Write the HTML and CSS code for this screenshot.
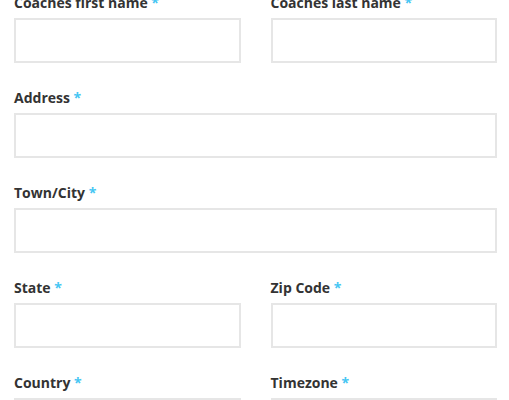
FILE: index.html
```html
<!DOCTYPE html>
<html lang="en">
<head>
    <meta charset="UTF-8">
    <meta name="viewport" content="width=device-width, initial-scale=1.0">
    <title>Coach details</title>
    <link rel="stylesheet" href="styles.css">
</head>
<body>
    <form class="coach-form">
        <div class="form-row two-col">
            <div class="field">
                <label>Coaches first name <span class="req">*</span></label>
                <input type="text">
            </div>
            <div class="field">
                <label>Coaches last name <span class="req">*</span></label>
                <input type="text">
            </div>
        </div>
        <div class="form-row">
            <div class="field">
                <label>Address <span class="req">*</span></label>
                <input type="text">
            </div>
        </div>
        <div class="form-row">
            <div class="field">
                <label>Town/City <span class="req">*</span></label>
                <input type="text">
            </div>
        </div>
        <div class="form-row two-col">
            <div class="field">
                <label>State <span class="req">*</span></label>
                <input type="text">
            </div>
            <div class="field">
                <label>Zip Code <span class="req">*</span></label>
                <input type="text">
            </div>
        </div>
        <div class="form-row two-col">
            <div class="field">
                <label>Country <span class="req">*</span></label>
                <input type="text">
            </div>
            <div class="field">
                <label>Timezone <span class="req">*</span></label>
                <input type="text">
            </div>
        </div>
    </form>
</body>
</html>
```

FILE: styles.css
```css
* {
    box-sizing: border-box;
}
body {
    margin: 0;
    background: #ffffff;
    font-family: "Open Sans", Arial, sans-serif;
    color: #333333;
    overflow: hidden;
}
.coach-form {
    margin-top: -7px;
    padding: 0 12px 0 14px;
}
.form-row {
    margin-bottom: 25px;
}
.two-col {
    display: grid;
    grid-template-columns: 1fr 1fr;
    column-gap: 30px;
}
.field label {
    display: block;
    font-size: 14px;
    line-height: 20px;
    font-weight: 700;
    margin-bottom: 5px;
}
.req {
    color: #45c6f3;
}
.field input {
    display: block;
    width: 100%;
    height: 45px;
    border: 2px solid #e6e6e6;
    background: #ffffff;
    padding: 0 10px;
    font-family: inherit;
    font-size: 14px;
    outline: none;
}
```
